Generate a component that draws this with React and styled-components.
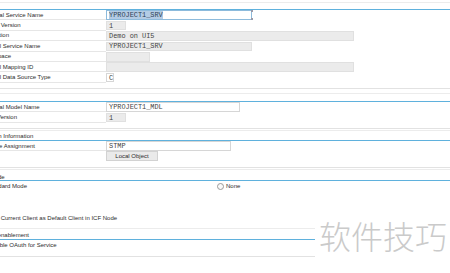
import React from "react";
import styled, { createGlobalStyle } from "styled-components";

const Global = createGlobalStyle`
  html, body { margin: 0; padding: 0; background: #ffffff; }
  body {
    width: 450px;
    height: 273px;
    overflow: hidden;
    font-family: "Liberation Sans", Arial, sans-serif;
    font-size: 6px;
    color: #2c2c2c;
  }
`;

const Screen = styled.div`
  position: relative;
  width: 450px;
  height: 273px;
  overflow: hidden;
`;

const Sheet = styled.div`
  margin-left: -21px;
  width: 471px;
  padding-top: 2px;
  display: flex;
  flex-direction: column;
`;

const Group = styled.section`
  width: ${(p) => (p.$width ? `${p.$width}px` : "auto")};
  margin-top: ${(p) => p.$gap || 0}px;
  padding-bottom: ${(p) => p.$pad || 0}px;
  border-top: 1px solid #ececec;
  border-bottom: ${(p) => (p.$closed ? "1px solid #e2e2e2" : "none")};
  display: flex;
  flex-direction: column;
`;

const GroupTitle = styled.div`
  height: ${(p) => p.$h}px;
  border-bottom: 1px solid #5fb1dd;
  display: flex;
  align-items: flex-end;
  padding-bottom: 0.5px;
  box-sizing: border-box;
  white-space: nowrap;
  color: #2a2a2a;
`;

const Row = styled.div`
  display: grid;
  grid-template-columns: ${(p) => p.$cols || "127px 1fr"};
  height: 10.4px;
  align-items: center;
`;

const Label = styled.div`
  height: 100%;
  box-sizing: border-box;
  border-bottom: ${(p) => (p.$plain ? "none" : "1px solid #e6e6e6")};
  display: flex;
  align-items: center;
  white-space: nowrap;
  overflow: hidden;
`;

const Field = styled.div`
  position: relative;
  width: ${(p) => p.$w}px;
  height: 9.6px;
  box-sizing: border-box;
  display: flex;
  align-items: center;
  padding-left: 2px;
  font-family: "Liberation Mono", "Courier New", monospace;
  font-size: 6.9px;
  color: #444444;
  white-space: nowrap;
  overflow: visible;
  background: ${(p) => (p.$tone === "grey" ? "#ebebeb" : "#ffffff")};
  border: 1px solid
    ${(p) =>
      p.$tone === "focus" ? "#8dbbdc" : p.$tone === "grey" ? "#e0e0e0" : "#d6d6d6"};

  ${(p) =>
    p.$tone === "focus" &&
    `
    &::before, &::after {
      content: "";
      position: absolute;
      right: -2px;
      width: 2px;
      height: 2px;
      background: #9a9aa8;
    }
    &::before { top: -1px; }
    &::after { bottom: -1px; }
  `}
`;

const Selected = styled.span`
  background: #b3cbe4;
  color: #2f3f55;
`;

const Button = styled.div`
  width: 52px;
  height: 10px;
  box-sizing: border-box;
  background: #eaeaea;
  border: 1px solid #d2d2d2;
  display: flex;
  align-items: center;
  justify-content: center;
  color: #2c2c2c;
  white-space: nowrap;
`;

const Choice = styled.div`
  display: flex;
  align-items: center;
  gap: 2px;
  margin-left: ${(p) => p.$indent || 0}px;
  white-space: nowrap;
  color: #2c2c2c;
`;

const Radio = styled.span`
  width: 5px;
  height: 5px;
  border: 0.6px solid #9a9a9a;
  border-radius: 50%;
  background: #fafafa;
  flex: none;
`;

const Check = styled.span`
  width: 5px;
  height: 5px;
  border: 0.6px solid #9a9a9a;
  background: #fafafa;
  flex: none;
`;

const Watermark = styled.div`
  position: absolute;
  left: 319px;
  top: 219px;
  font-family: "Noto Sans CJK SC", "Noto Sans", sans-serif;
  font-size: 32px;
  line-height: 1;
  font-weight: 300;
  color: #cacaca;
  white-space: nowrap;
`;

const fields1 = [
  { label: "Technical Service Name", w: 146, tone: "focus", value: "YPROJECT1_SRV", selected: true },
  { label: "Service Version", w: 20, tone: "grey", value: "1" },
  { label: "Description", w: 248, tone: "grey", value: "Demo on UI5" },
  { label: "External Service Name", w: 146, tone: "grey", value: "YPROJECT1_SRV" },
  { label: "Namespace", w: 44, tone: "grey", value: "" },
  { label: "External Mapping ID", w: 248, tone: "grey", value: "" },
  { label: "External Data Source Type", w: 8, tone: "white", value: "C" },
];

const fields2 = [
  { label: "Technical Model Name", w: 134, tone: "white", value: "YPROJECT1_MDL" },
  { label: "Model Version", w: 20, tone: "grey", value: "1" },
];

function FieldRow({ f }) {
  return (
    <Row>
      <Label>{f.label}</Label>
      <Field $w={f.w} $tone={f.tone}>
        {f.selected ? <Selected>{f.value}</Selected> : f.value}
      </Field>
    </Row>
  );
}

export default function App() {
  return (
    <Screen>
      <Global />
      <Sheet>
        <Group $pad={5.2} $closed>
          <GroupTitle $h={7} />
          {fields1.map((f) => (
            <FieldRow key={f.label} f={f} />
          ))}
        </Group>

        <Group $gap={4} $pad={5.2} $closed>
          <GroupTitle $h={8} />
          {fields2.map((f) => (
            <FieldRow key={f.label} f={f} />
          ))}
        </Group>

        <Group $gap={1} $pad={5.6} $closed>
          <GroupTitle $h={10}>Creation Information</GroupTitle>
          <Row>
            <Label>Package Assignment</Label>
            <Field $w={125} $tone="white">STMP</Field>
          </Row>
          <Row>
            <Label $plain />
            <Button>Local Object</Button>
          </Row>
        </Group>

        <Group $gap={1}>
          <GroupTitle $h={11}>ICF Node</GroupTitle>
          <Row $cols="238px 1fr">
            <Choice $indent={-2}>
              <Radio />
              Standard Mode
            </Choice>
            <Choice>
              <Radio />
              None
            </Choice>
          </Row>
          <Row />
          <Row />
          <Row $cols="1fr">
            <Choice $indent={2}>
              <Check />
              Set Current Client as Default Client in ICF Node
            </Choice>
          </Row>
        </Group>

        <Group $gap={5} $pad={6} $width={336} $closed>
          <GroupTitle $h={11}>OAuth enablement</GroupTitle>
          <Row $cols="1fr">
            <Choice $indent={1}>
              <Check />
              Enable OAuth for Service
            </Choice>
          </Row>
        </Group>
      </Sheet>
      <Watermark>软件技巧</Watermark>
    </Screen>
  );
}
